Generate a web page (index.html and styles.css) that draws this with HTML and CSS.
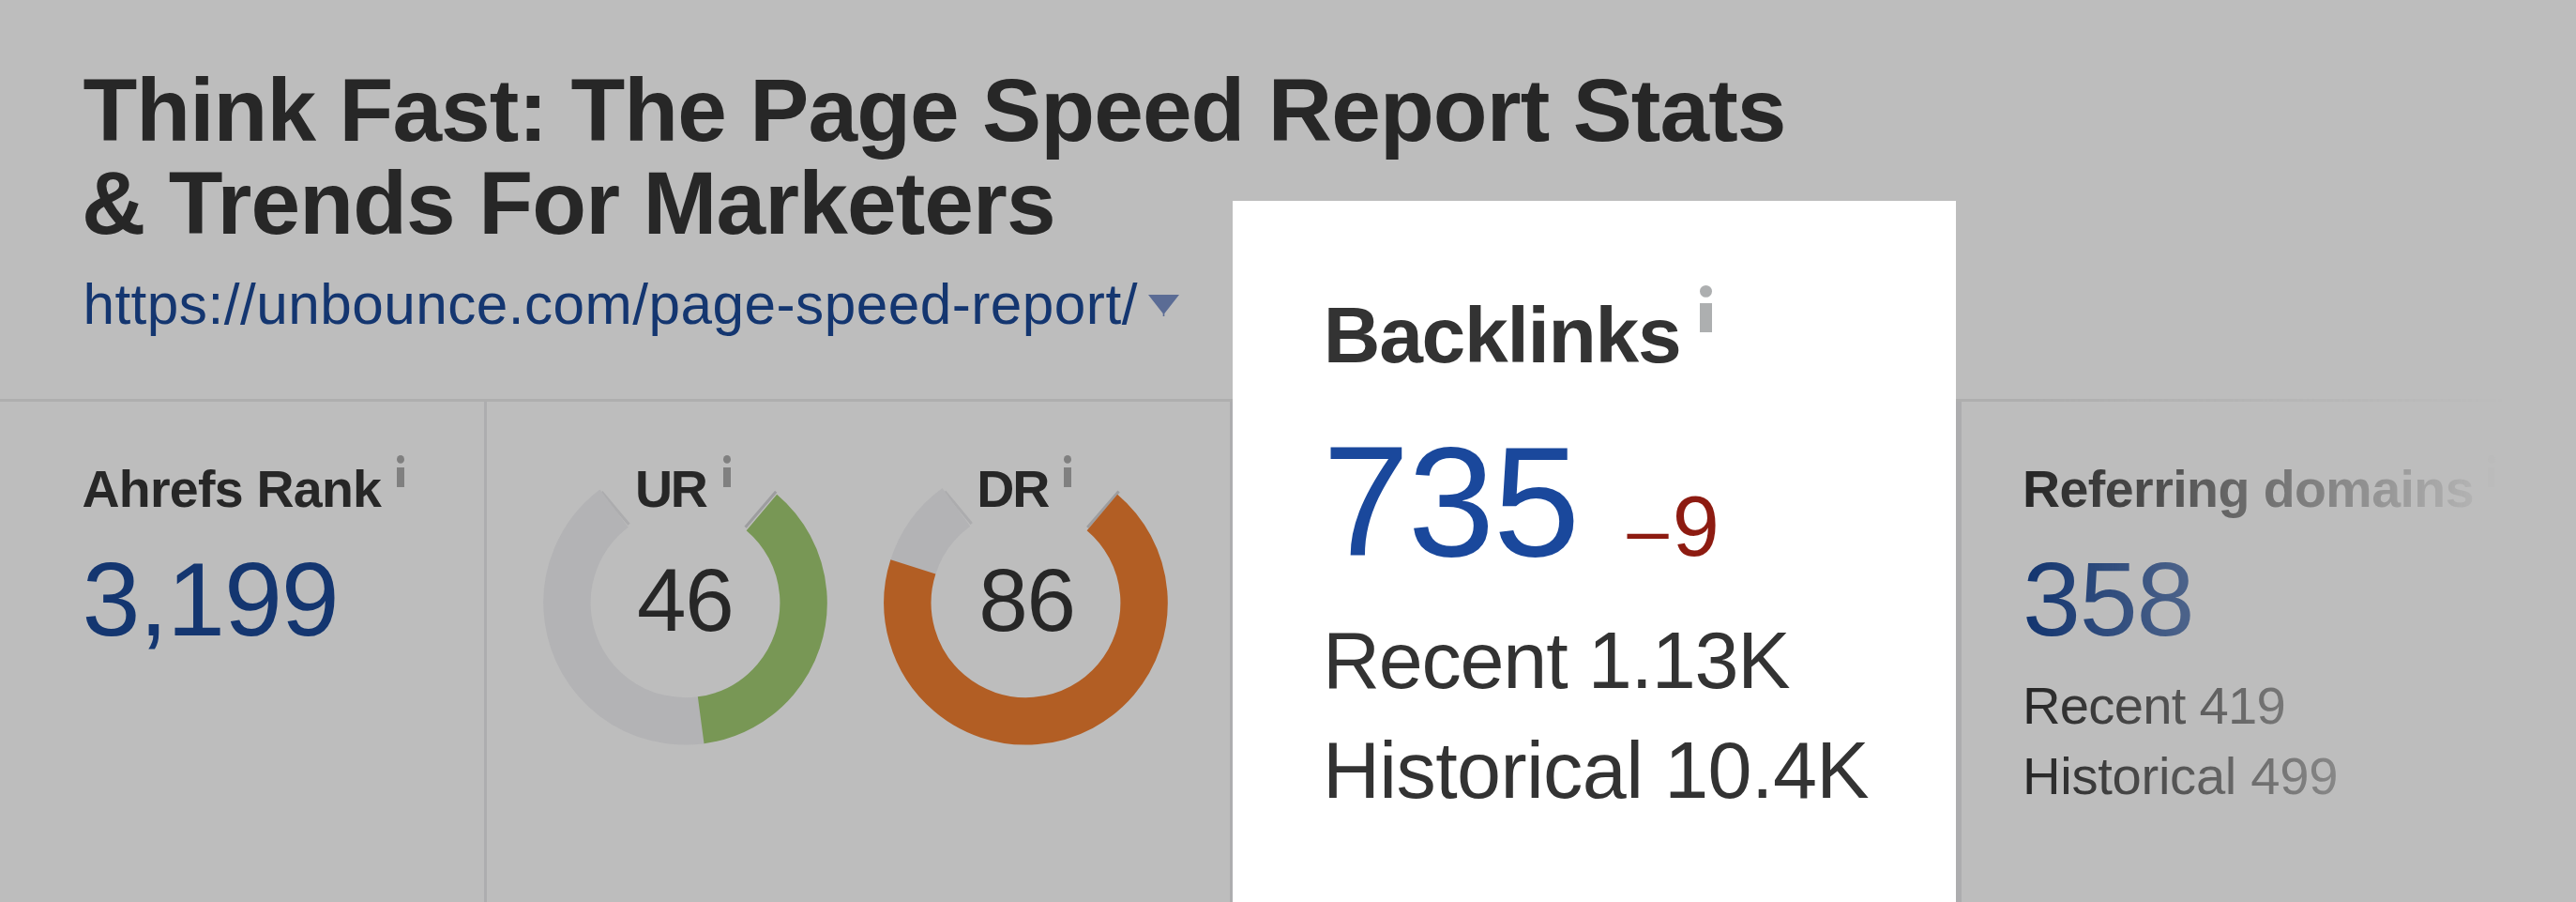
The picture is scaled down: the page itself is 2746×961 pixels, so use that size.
FILE: index.html
```html
<!DOCTYPE html>
<html lang="en">
<head>
<meta charset="utf-8">
<title>Page report</title>
<link rel="stylesheet" href="styles.css">
</head>
<body>
<svg class="defs" width="0" height="0" aria-hidden="true">
  <symbol id="info" viewBox="0 0 8 34">
    <ellipse cx="4" cy="4.4" rx="4" ry="4.4"/>
    <rect x="0" y="13" width="8" height="21"/>
  </symbol>
</svg>
<main class="report">
  <div class="overview">
    <header class="header">
      <h1 class="title">Think Fast: The Page Speed Report Stats<br><span class="title-second">&amp; Trends For Marketers</span></h1>
      <div class="url-row">
        <a class="url">https://unbounce.com/page-speed-report/</a>
        <svg class="caret" viewBox="0 0 33 24"><path d="M0 0H33L17.3 20V23H15.7V20Z"/></svg>
      </div>
    </header>
    <div class="metrics">
      <section class="metric rank">
        <div class="label-row"><span class="label label-rank">Ahrefs Rank</span><svg class="info"><use href="#info"/></svg></div>
        <div class="value">3,199</div>
      </section>
      <section class="metric ratings">
        <div class="gauge gauge-ur">
          <svg class="ring" viewBox="0 0 303 303">
            <path class="ring-edge" d="M62.3 33L91.5 67.7"/>
            <path class="ring-start" d="M248.2 32.8L215.6 70.8"/>
            <circle class="arc track" cx="151.5" cy="151.3" r="126.1" pathLength="360" stroke-dasharray="151 360" transform="rotate(82 151.5 151.3)"/>
            <circle class="arc green" cx="151.5" cy="151.3" r="126.1" pathLength="360" stroke-dasharray="132.2 360" transform="rotate(-49.8 151.5 151.3)"/>
          </svg>
          <div class="gauge-text">
            <div class="label-row"><span class="label label-ur">UR</span><svg class="info"><use href="#info"/></svg></div>
            <div class="score">46</div>
          </div>
        </div>
        <div class="gauge gauge-dr">
          <svg class="ring" viewBox="0 0 303 303">
            <path class="ring-edge" d="M65.2 32.6L93.7 67"/>
            <path class="ring-start" d="M250.6 32.5L217.2 71"/>
            <circle class="arc track" cx="151.5" cy="151.3" r="126.1" pathLength="360" stroke-dasharray="37 360" transform="rotate(287 151.5 151.3) rotate(-90 151.5 151.3)"/>
            <circle class="arc orange" cx="151.5" cy="151.3" r="126.1" pathLength="360" stroke-dasharray="247.5 360" transform="rotate(-49.8 151.5 151.3)"/>
          </svg>
          <div class="gauge-text">
            <div class="label-row"><span class="label label-dr">DR</span><svg class="info"><use href="#info"/></svg></div>
            <div class="score">86</div>
          </div>
        </div>
      </section>
      <section class="metric gap-column"></section>
      <section class="metric domains">
        <div class="label-row"><span class="label label-domains">Referring domains</span><svg class="info"><use href="#info"/></svg></div>
        <div class="value">358</div>
        <div class="detail detail-first">Recent 419</div>
        <div class="detail detail-wide">Historical 499</div>
      </section>
    </div>
  </div>
  <section class="card">
    <div class="card-label-row"><span class="card-label">Backlinks</span><svg class="card-info" viewBox="0 0 13 50"><ellipse cx="6.5" cy="6.4" rx="6.5" ry="6.4"/><rect y="19" width="13" height="31"/></svg></div>
    <div class="card-value-row"><span class="card-value">735</span><span class="delta"><span class="minus">–</span>9</span></div>
    <div class="card-detail">Recent 1.13K</div>
    <div class="card-detail card-detail-wide">Historical 10.4K</div>
  </section>
</main>
</body>
</html>
```
FILE: styles.css
```css
* { box-sizing: border-box; }

body {
  margin: 0;
  background: #bdbdbd;
  color: #272727;
  font-family: "Liberation Sans", Arial, Helvetica, sans-serif;
  overflow: hidden;
}

.defs { position: absolute; }

.report {
  position: relative;
  width: 2746px;
  height: 961px;
  overflow: hidden;
}

/* The overview fades out toward the right edge */
.overview {
  display: flex;
  flex-direction: column;
  height: 961px;
  -webkit-mask-image: linear-gradient(to right, #000 2165px, transparent 2670px);
  mask-image: linear-gradient(to right, #000 2165px, transparent 2670px);
}

.header {
  height: 428px;
  padding: 68px 0 0 88.4px;
  border-bottom: 3px solid #aeaeae;
}

.title {
  margin: 0;
  font-size: 94.6px;
  line-height: 99px;
  letter-spacing: -0.9px;
  white-space: nowrap;
}

.title-second {
  margin-left: -1.5px;
  letter-spacing: -0.85px;
}

.url-row {
  display: flex;
  align-items: flex-start;
  margin-top: 28px;
}

.url {
  color: #143670;
  font-size: 60.3px;
  line-height: 60px;
  letter-spacing: 0.47px;
  white-space: nowrap;
}

.caret {
  width: 33px;
  height: 24px;
  margin: 20px 0 0 11px;
  fill: #5b6c95;
}

.metrics {
  display: grid;
  grid-template-columns: 519px 795px 777px 1fr;
  flex: 1;
}

.metric { padding-top: 63px; white-space: nowrap; }

.rank, .ratings { border-right: 3px solid #adadaf; }
.gap-column { border-right: 6px solid #adadaf; }

.rank { padding-left: 87.5px; }
.domains { padding-left: 65px; }

.label-row {
  display: flex;
  align-items: flex-start;
  height: 60px;
}

.label {
  font-size: 55.5px;
  font-weight: bold;
  line-height: 60px;
}

.label-rank { letter-spacing: -0.75px; margin-right: 17px; }
.label-ur { letter-spacing: -2.2px; margin-right: 18.3px; }
.label-dr { letter-spacing: -2px; margin-right: 16.6px; }
.label-domains { letter-spacing: -0.55px; margin-right: 15px; }

.info {
  width: 8px;
  height: 34px;
  margin-top: -6px;
  fill: #808080;
}

.value {
  margin-top: 32px;
  color: #143670;
  font-size: 111.5px;
  line-height: 112px;
  letter-spacing: -1.2px;
}

.detail {
  font-size: 56.2px;
  line-height: 75px;
  letter-spacing: -0.75px;
}

.detail-first { margin-top: 18.6px; }
.detail-wide { letter-spacing: -0.3px; }

.ratings {
  display: flex;
  gap: 60px;
  padding-top: 0;
  padding-left: 60.2px;
}

.gauge {
  display: grid;
  grid-template-columns: 303px;
  align-content: start;
}

.ring, .gauge-text { grid-area: 1 / 1; }

.ring {
  width: 303px;
  height: 303px;
  margin-top: 63.2px;
}

.arc { fill: none; stroke-width: 50.4; }
.track { stroke: #b3b3b5; }
.green { stroke: #789755; }
.orange { stroke: #b25e24; }
.ring-edge { fill: none; stroke: #acacae; stroke-width: 3; }
.ring-start { fill: none; stroke: #9d9d9f; stroke-width: 3; }

.gauge-text { padding-top: 63px; }
.gauge-ur .gauge-text { padding-left: 97.8px; }
.gauge-dr .gauge-text { padding-left: 99.1px; }

.score {
  margin: 41.1px 0 0 2px;
  font-size: 94.4px;
  line-height: 95px;
  letter-spacing: -1.2px;
}

/* Highlighted metric lifted above the overview */
.card {
  position: absolute;
  top: 214px;
  left: 1314px;
  width: 771px;
  height: 747px;
  padding: 98px 0 0 95.9px;
  background: #fff;
  color: #333;
  white-space: nowrap;
}

.card-label-row {
  display: flex;
  align-items: flex-start;
  height: 90px;
  padding-left: 0.9px;
}

.card-label {
  margin-right: 20.8px;
  font-size: 84px;
  font-weight: bold;
  line-height: 90px;
  letter-spacing: -1.3px;
}

.card-info {
  width: 13px;
  height: 50px;
  margin-top: -8px;
  fill: #adafb0;
}

.card-value-row {
  display: flex;
  align-items: baseline;
  height: 167px;
  margin-top: 49px;
  line-height: 167px;
}

.card-value {
  color: #1a489c;
  font-size: 166.5px;
  letter-spacing: -1.7px;
}

.delta {
  margin-left: 52px;
  color: #8d1b11;
  font-size: 90.1px;
  line-height: 90px;
}

.minus {
  font-size: 79.5px;
  letter-spacing: 4px;
}

.card-detail {
  font-size: 84.5px;
  line-height: 117px;
  letter-spacing: -1.2px;
}

.card-value-row + .card-detail { margin-top: 27.8px; }
.card-detail-wide { letter-spacing: -0.6px; }
```
